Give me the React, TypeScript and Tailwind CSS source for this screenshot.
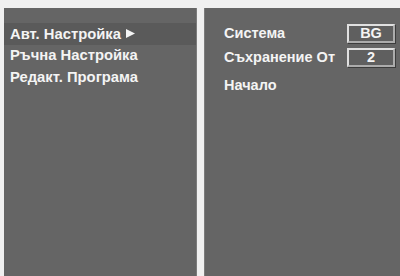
const font = { fontFamily: '"Liberation Sans", Arial, sans-serif' }

function ValueBox({ value }: { value: string }) {
  return (
    <div className="w-[48px] h-[19px] flex items-center justify-center border-2 border-t-[#e0e0e0] border-l-[#e0e0e0] border-r-[#acacac] border-b-[#acacac] shadow-[1px_1px_0_#3c3c3c] bg-[#5f5f5f] text-[14.5px] font-bold text-[#f4f4f4] leading-none">
      {value}
    </div>
  )
}

export default function App() {
  const menu = ['Авт. Настройка', 'Ръчна Настройка', 'Редакт. Програма']

  return (
    <div style={font} className="w-[400px] h-[276px] bg-[#f0f0f0] pt-[8px] pl-[4px] flex gap-[7px] overflow-hidden">
      <div className="w-[193px] h-full bg-[#656565] border-r border-[#7c7c7c] pt-[15px]">
        {menu.map((item, i) => (
          <div
            key={item}
            className={`h-[21.5px] flex items-center pl-[6px] text-[14.8px] font-bold text-[#f4f4f4] ${i === 0 ? 'bg-[#5a5a5a]' : ''}`}
          >
            {item}
            {i === 0 && (
              <svg width="9" height="9" viewBox="0 0 9 9" className="ml-[5px]">
                <path d="M0 0 L9 4.5 L0 9 Z" fill="#f4f4f4" />
              </svg>
            )}
          </div>
        ))}
      </div>

      <div className="flex-1 h-full bg-[#656565] border-l border-[#7c7c7c] pt-[16px] pl-[19px] pr-[5px]">
        <div className="flex items-center justify-between h-[19px] text-[14.5px] font-bold text-[#f4f4f4]">
          <span>Система</span>
          <ValueBox value="BG" />
        </div>
        <div className="flex items-center justify-between h-[19px] mt-[5px] text-[14.5px] font-bold text-[#f4f4f4]">
          <span>Съхранение От</span>
          <ValueBox value="2" />
        </div>
        <div className="h-[19px] mt-[9px] flex items-center text-[14.5px] font-bold text-[#f4f4f4]">
          Начало
        </div>
      </div>
    </div>
  )
}
